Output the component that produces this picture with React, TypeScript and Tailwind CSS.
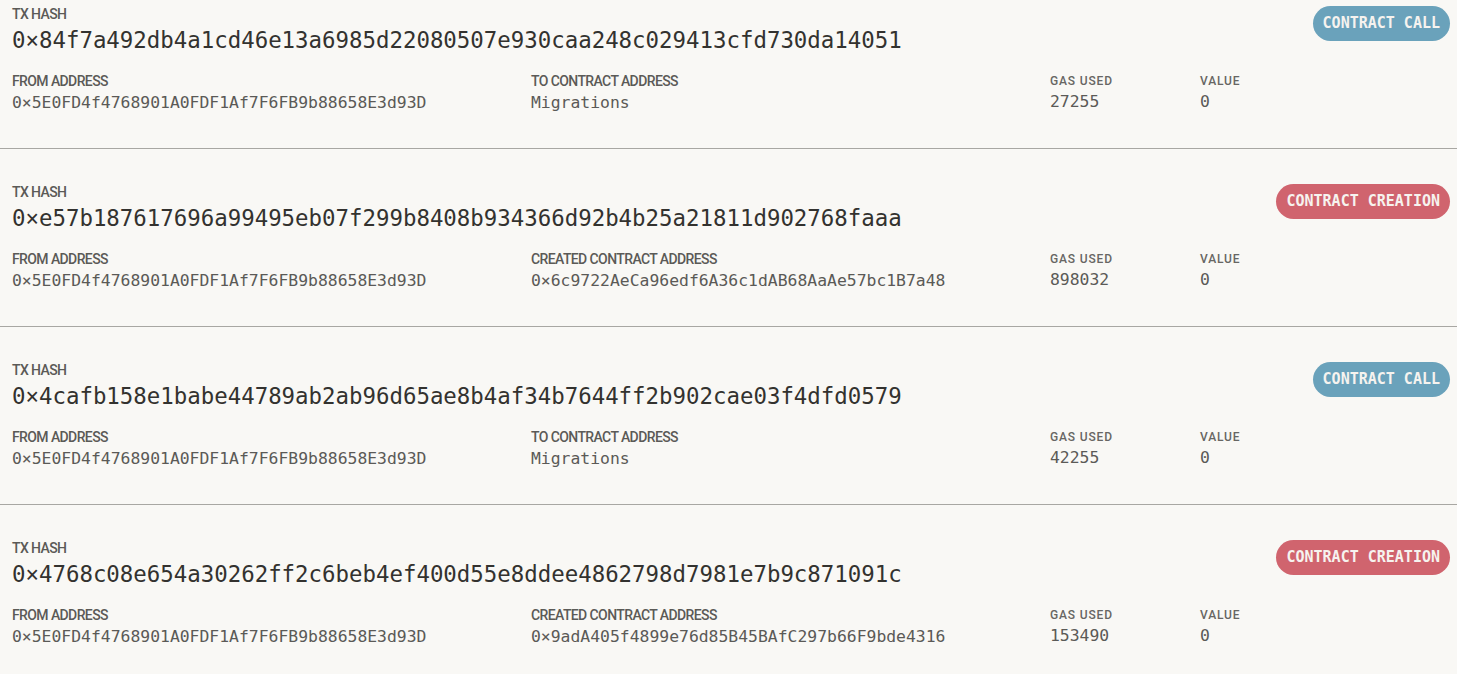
import React from "react";

type Tx = {
  hash: string;
  from: string;
  toLabel: string;
  to: string;
  gas: string;
  value: string;
  kind: "call" | "creation";
};

const txs: Tx[] = [
  {
    hash: "0×84f7a492db4a1cd46e13a6985d22080507e930caa248c029413cfd730da14051",
    from: "0×5E0FD4f4768901A0FDF1Af7F6FB9b88658E3d93D",
    toLabel: "TO CONTRACT ADDRESS",
    to: "Migrations",
    gas: "27255",
    value: "0",
    kind: "call",
  },
  {
    hash: "0×e57b187617696a99495eb07f299b8408b934366d92b4b25a21811d902768faaa",
    from: "0×5E0FD4f4768901A0FDF1Af7F6FB9b88658E3d93D",
    toLabel: "CREATED CONTRACT ADDRESS",
    to: "0×6c9722AeCa96edf6A36c1dAB68AaAe57bc1B7a48",
    gas: "898032",
    value: "0",
    kind: "creation",
  },
  {
    hash: "0×4cafb158e1babe44789ab2ab96d65ae8b4af34b7644ff2b902cae03f4dfd0579",
    from: "0×5E0FD4f4768901A0FDF1Af7F6FB9b88658E3d93D",
    toLabel: "TO CONTRACT ADDRESS",
    to: "Migrations",
    gas: "42255",
    value: "0",
    kind: "call",
  },
  {
    hash: "0×4768c08e654a30262ff2c6beb4ef400d55e8ddee4862798d7981e7b9c871091c",
    from: "0×5E0FD4f4768901A0FDF1Af7F6FB9b88658E3d93D",
    toLabel: "CREATED CONTRACT ADDRESS",
    to: "0×9adA405f4899e76d85B45BAfC297b66F9bde4316",
    gas: "153490",
    value: "0",
    kind: "creation",
  },
];

const label =
  "font-['Roboto',sans-serif] text-[14px] font-medium leading-4 text-[#5b5a57] tracking-[-0.6px]";
const smallLabel =
  "font-['Roboto',sans-serif] text-[12px] font-medium leading-4 tracking-[0.07em] text-[#676663]";
const mono = "font-['DejaVu_Sans_Mono','Liberation_Mono',monospace]";
const value = `${mono} text-[16.4px] leading-5 text-[#5b5a57]`;

function Badge({ kind }: { kind: Tx["kind"] }) {
  return (
    <div
      className={`${mono} h-[35px] px-[10px] rounded-full flex items-center text-[15px] font-bold text-[#f6f3ef] ${
        kind === "call" ? "bg-[#6aa2bb]" : "bg-[#d0646e]"
      }`}
    >
      {kind === "call" ? "CONTRACT CALL" : "CONTRACT CREATION"}
    </div>
  );
}

function TxRow({ tx }: { tx: Tx }) {
  return (
    <div className="border-b border-[#a8a7a3] pt-[35px] pb-[35px] pl-3 pr-[7px]">
      <div className="flex justify-between items-start">
        <div>
          <div className={label}>TX HASH</div>
          <div className={`${mono} text-[22.4px] leading-7 text-[#33322f] mt-[4px]`}>{tx.hash}</div>
        </div>
        <Badge kind={tx.kind} />
      </div>
      <div className="grid grid-cols-[519px_519px_150px_1fr] mt-[19px]">
        <div>
          <div className={label}>FROM ADDRESS</div>
          <div className={`${value} mt-[4px]`}>{tx.from}</div>
        </div>
        <div>
          <div className={label}>{tx.toLabel}</div>
          <div className={`${value} mt-[4px]`}>{tx.to}</div>
        </div>
        <div>
          <div className={smallLabel}>GAS USED</div>
          <div className={`${value} mt-[3px]`}>{tx.gas}</div>
        </div>
        <div>
          <div className={smallLabel}>VALUE</div>
          <div className={`${value} mt-[3px]`}>{tx.value}</div>
        </div>
      </div>
    </div>
  );
}

export default function App() {
  return (
    <div className="w-[1457px] h-[674px] overflow-hidden bg-[#f9f8f5]">
      <div className="-mt-[29px]">
        {txs.map((tx) => (
          <TxRow key={tx.hash} tx={tx} />
        ))}
      </div>
    </div>
  );
}
